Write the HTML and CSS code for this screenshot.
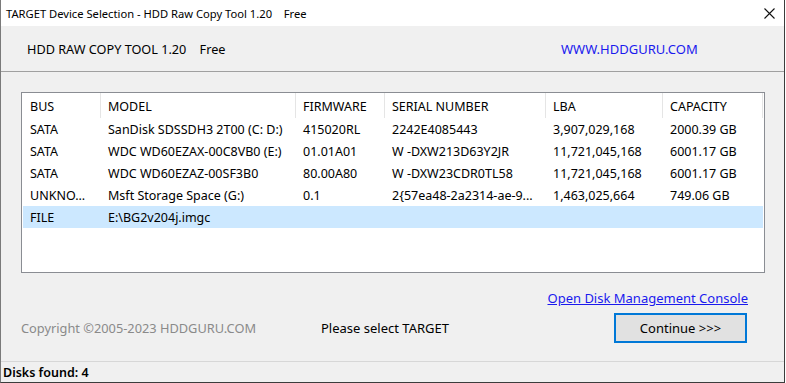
FILE: index.html
```html
<!doctype html>
<html>
<head>
<meta charset="utf-8">
<title>TARGET Device Selection - HDD Raw Copy Tool 1.20</title>
<link rel="stylesheet" href="styles.css">
</head>
<body>
<div class="window">
  <div class="titlebar">
    <span class="caption">TARGET Device Selection - HDD Raw Copy Tool 1.20&nbsp;&nbsp;&nbsp;&nbsp;Free</span>
    <svg class="close" width="11" height="11" viewBox="0 0 11 11"><path d="M0.5 0.5 L10.5 10.5 M10.5 0.5 L0.5 10.5" stroke="#111" stroke-width="1.1" fill="none"/></svg>
  </div>
  <div class="header">
    <span class="product">HDD RAW COPY TOOL 1.20&nbsp;&nbsp;&nbsp;&nbsp;Free</span>
    <span class="site">WWW.HDDGURU.COM</span>
  </div>
  <div class="content">
    <div class="list">
      <div class="row head">
        <div>BUS</div><div>MODEL</div><div>FIRMWARE</div><div>SERIAL NUMBER</div><div>LBA</div><div>CAPACITY</div>
      </div>
      <div class="row">
        <div>SATA</div><div>SanDisk SDSSDH3 2T00 (C: D:)</div><div>415020RL</div><div>2242E4085443</div><div>3,907,029,168</div><div>2000.39 GB</div>
      </div>
      <div class="row">
        <div>SATA</div><div>WDC WD60EZAX-00C8VB0 (E:)</div><div>01.01A01</div><div>W -DXW213D63Y2JR</div><div>11,721,045,168</div><div>6001.17 GB</div>
      </div>
      <div class="row">
        <div>SATA</div><div>WDC WD60EZAZ-00SF3B0</div><div>80.00A80</div><div>W -DXW23CDR0TL58</div><div>11,721,045,168</div><div>6001.17 GB</div>
      </div>
      <div class="row">
        <div>UNKNO...</div><div>Msft Storage Space (G:)</div><div>0.1</div><div>2{57ea48-2a2314-ae-9...</div><div>1,463,025,664</div><div>749.06 GB</div>
      </div>
      <div class="row selected">
        <div>FILE</div><div>E:\BG2v204j.imgc</div><div></div><div></div><div></div><div></div>
      </div>
    </div>
    <div class="linkrow"><a class="console" href="#">Open Disk Management Console</a></div>
    <div class="actions">
      <span class="copyright">Copyright &copy;2005-2023 HDDGURU.COM</span>
      <span class="status">Please select TARGET</span>
      <button class="continue">Continue &gt;&gt;&gt;</button>
    </div>
  </div>
  <div class="statusbar">Disks found: 4</div>
</div>
</body>
</html>
```

FILE: styles.css
```css
html, body {
	margin: 0;
	padding: 0;
	background: #ffffff;
}
.window {
	width: 785px;
	height: 383px;
	box-sizing: border-box;
	border-left: 1px solid #7a7a7a;
	border-right: 1px solid #3c3c3c;
	border-bottom: 1px solid #3c3c3c;
	background: #f0f0f0;
	font-family: "Noto Sans", "Liberation Sans", sans-serif;
	font-size: 12.5px;
	color: #000;
	display: flex;
	flex-direction: column;
}
.titlebar {
	height: 26px;
	background: #ffffff;
	display: flex;
	align-items: center;
	justify-content: space-between;
	padding: 0 9px 0 5px;
	font-size: 11.2px;
}
.close { display: block; margin-top: 1px; }
.header {
	height: 45px;
	display: flex;
	align-items: center;
	padding-left: 26px;
	font-size: 12.7px;
	border-bottom: 1px solid #a0a0a0;
}
.product { width: 534px; }
.site { color: #1a1aee; font-size: 13px; }
.content {
	flex: 1;
	padding: 20px 19px 0 20px;
	display: flex;
	flex-direction: column;
}
.list {
	height: 181px;
	box-sizing: border-box;
	border: 1px solid #8a8d93;
	background: #ffffff;
	padding: 0 1px;
}
.row {
	display: grid;
	grid-template-columns: 78px 195px 89px 161px 117px 100px;
	height: 22px;
	align-items: center;
}
.row > div {
	padding-left: 7px;
	white-space: nowrap;
	overflow: hidden;
}
.row.head { height: 25px; }
.row.head > div {
	height: 100%;
	display: flex;
	align-items: center;
	padding-top: 1px;
	border-right: 1px solid #e5e5e5;
	box-sizing: border-box;
}
.row.selected { background: #cce8ff; }
.linkrow {
	display: flex;
	justify-content: flex-end;
	padding: 16px 17px 0 0;
	font-size: 13px;
}
.console { color: #1a1aee; text-decoration: underline; }
.actions {
	display: grid;
	grid-template-columns: 300px 293px 133px;
	align-items: center;
	margin-top: 6px;
	font-size: 13px;
}
.copyright { color: #8a8a8a; font-size: 12.8px; }
.continue {
	height: 30px;
	box-sizing: border-box;
	border: 2px solid #0078d7;
	background: #e1e1e1;
	font-family: "Noto Sans", "Liberation Sans", sans-serif;
	font-size: 13px;
	color: #000;
	padding: 0;
}
.statusbar {
	height: 20px;
	border-top: 1px solid #d7d7d7;
	display: flex;
	align-items: center;
	padding-left: 2px;
	font-size: 12.5px;
	font-weight: 600;
}
```
